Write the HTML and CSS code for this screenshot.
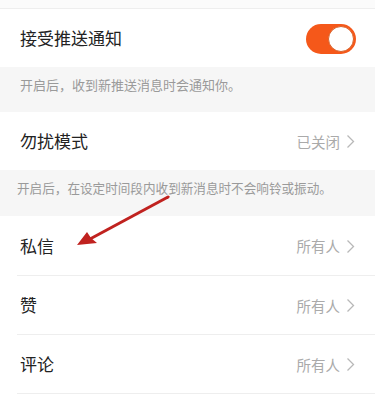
FILE: index.html
```html
<!DOCTYPE html>
<html lang="zh-CN">
<head>
<meta charset="utf-8">
<link rel="stylesheet" href="styles.css">
</head>
<body>
<div class="page">
  <div class="top"></div>
  <div class="row">
    <span class="label">接受推送通知</span>
    <span class="toggle"><span class="knob"></span></span>
  </div>
  <div class="note">开启后，收到新推送消息时会通知你。</div>
  <div class="row">
    <span class="label">勿扰模式</span>
    <span class="value">已关闭<svg class="chev" viewBox="0 0 9 15" width="9" height="15"><polyline points="1.5,1.5 7.5,7.5 1.5,13.5" fill="none" stroke="#b8b8b8" stroke-width="1.3"/></svg></span>
  </div>
  <div class="note note2">开启后，在设定时间段内收到新消息时不会响铃或振动。</div>
  <div class="list">
    <div class="item item-first">
      <span class="label">私信</span>
      <span class="value">所有人<svg class="chev" viewBox="0 0 9 15" width="9" height="15"><polyline points="1.5,1.5 7.5,7.5 1.5,13.5" fill="none" stroke="#b8b8b8" stroke-width="1.3"/></svg></span>
    </div>
    <div class="item">
      <span class="label">赞</span>
      <span class="value">所有人<svg class="chev" viewBox="0 0 9 15" width="9" height="15"><polyline points="1.5,1.5 7.5,7.5 1.5,13.5" fill="none" stroke="#b8b8b8" stroke-width="1.3"/></svg></span>
    </div>
    <div class="item">
      <span class="label">评论</span>
      <span class="value">所有人<svg class="chev" viewBox="0 0 9 15" width="9" height="15"><polyline points="1.5,1.5 7.5,7.5 1.5,13.5" fill="none" stroke="#b8b8b8" stroke-width="1.3"/></svg></span>
    </div>
  </div>
  <svg class="arrow" viewBox="0 0 375 400" width="375" height="400">
    <line x1="168" y1="197" x2="90" y2="239" stroke="#c0221f" stroke-width="3" stroke-linecap="round"/>
    <polygon points="77,245 87,232 91,238 97,243" fill="#c0221f"/>
  </svg>
</div>
</body>
</html>
```
FILE: styles.css
```css
html, body {
  margin: 0;
  padding: 0;
  background: #ffffff;
}
.page {
  position: relative;
  width: 375px;
  height: 400px;
  overflow: hidden;
  font-family: "Noto Sans CJK SC", "Noto Sans", sans-serif;
  background: #ffffff;
}
.top {
  height: 8px;
  background: #fbfbfb;
  border-bottom: 1px solid #eeeeee;
}
.row {
  height: 58px;
  padding: 0 20px;
  display: flex;
  align-items: center;
  justify-content: space-between;
  background: #ffffff;
}
.label {
  font-size: 17px;
  color: #222222;
  line-height: 20px;
}
.toggle {
  position: relative;
  width: 50px;
  height: 30px;
  border-radius: 15px;
  background: #f5581a;
  margin-right: -1px;
  margin-top: 1px;
}
.knob {
  position: absolute;
  right: 2px;
  top: 2px;
  width: 24px;
  height: 24px;
  border-radius: 50%;
  background: #ffffff;
  border: 1px solid #d9622a;
}
.note {
  height: 45px;
  box-sizing: border-box;
  padding: 10px 0 0 20px;
  background: #f6f6f6;
  font-size: 13px;
  line-height: 16px;
  color: #9a9a9a;
}
.note2 {
  height: 46px;
  padding-left: 17px;
  font-size: 12.6px;
}
.value {
  display: flex;
  align-items: center;
  font-size: 14.5px;
  color: #aaaaaa;
}
.chev {
  margin-left: 6px;
  margin-top: 1px;
}
.list {
  background: #ffffff;
}
.item {
  height: 58px;
  margin-left: 17px;
  padding: 0 20px 0 3px;
  border-bottom: 1px solid #eeeeee;
  display: flex;
  align-items: center;
  justify-content: space-between;
}
.item-first {
  height: 59px;
}
.arrow {
  position: absolute;
  left: 0;
  top: 0;
  pointer-events: none;
}
```
